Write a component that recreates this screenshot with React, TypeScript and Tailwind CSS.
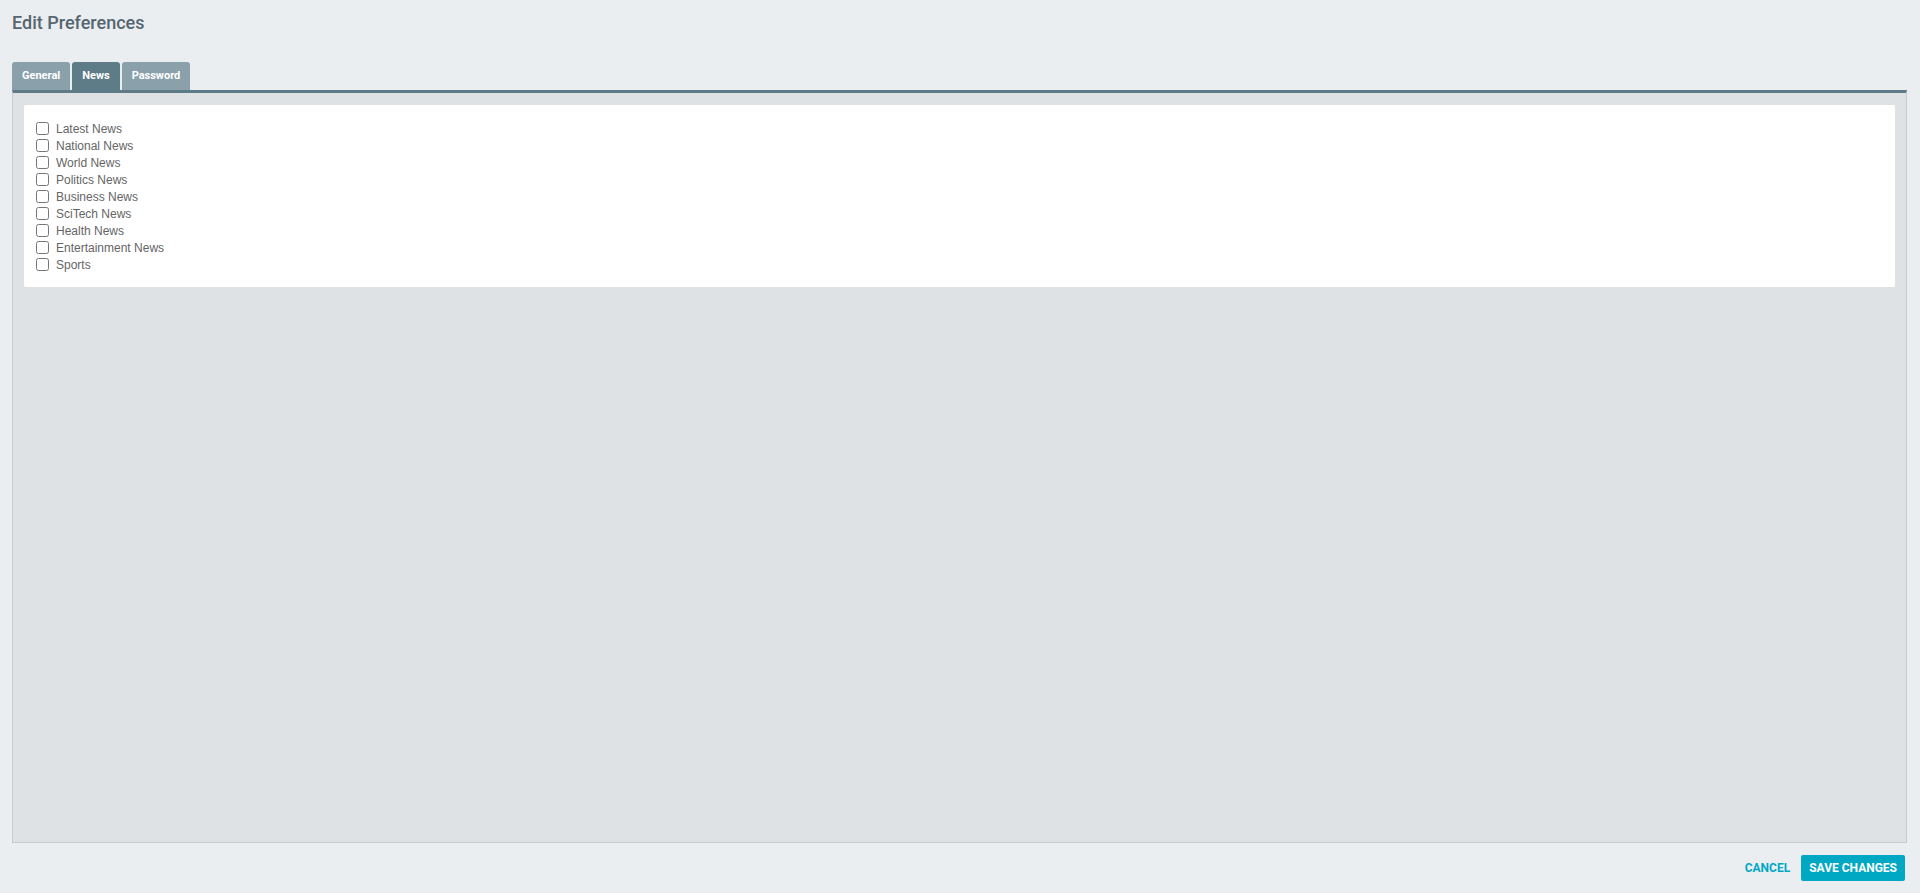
import React from "react";

const items = [
  "Latest News",
  "National News",
  "World News",
  "Politics News",
  "Business News",
  "SciTech News",
  "Health News",
  "Entertainment News",
  "Sports",
];

export default function App() {
  return (
    <div
      className="h-[893px] w-full flex flex-col bg-[#eaeef1]"
      style={{ fontFamily: "Roboto, 'Liberation Sans', Arial, sans-serif" }}
    >
      <div className="pt-[11px] pl-[12px] h-[35px] text-[18px] leading-[24px] font-medium text-[#56656f]">
        Edit Preferences
      </div>
      <div className="mt-[27px] pl-[12px] flex gap-[2px] h-[28px]">
        <div className="px-[10px] rounded-t-[3px] bg-[#8aa0ab] text-white text-[11px] font-bold flex items-center">
          General
        </div>
        <div className="px-[10px] rounded-t-[3px] bg-[#5e7b88] text-white text-[11px] font-bold flex items-center">
          News
        </div>
        <div className="px-[10px] rounded-t-[3px] bg-[#8aa0ab] text-white text-[11px] font-bold flex items-center">
          Password
        </div>
      </div>
      <div className="flex-1 ml-[12px] mr-[13px] border-t-[3px] border-t-[#5e7b88] border-x border-b border-x-[#c6ccd0] border-b-[#c6ccd0] bg-[#dee2e5] px-[11px] pt-[12px]">
        <div
          className="bg-white rounded-[2px] pl-[12px] pt-[15px] pb-[14px]"
          style={{ fontFamily: "'Liberation Sans', Arial, sans-serif" }}
        >
          {items.map((label) => (
            <div key={label} className="h-[17px] flex items-center">
              <input
                type="checkbox"
                className="m-0 w-[13px] h-[13px]"
              />
              <span className="ml-[7px] text-[12px] text-[#656565]">{label}</span>
            </div>
          ))}
        </div>
      </div>
      <div className="h-[50px] flex items-center justify-end pr-[15px] gap-[11px]">
        <button className="text-[12px] font-bold text-[#00a8c4] uppercase">Cancel</button>
        <button className="h-[26px] px-[8px] rounded-[2px] bg-[#00a8c4] text-white text-[12px] font-bold uppercase">
          Save Changes
        </button>
      </div>
    </div>
  );
}
